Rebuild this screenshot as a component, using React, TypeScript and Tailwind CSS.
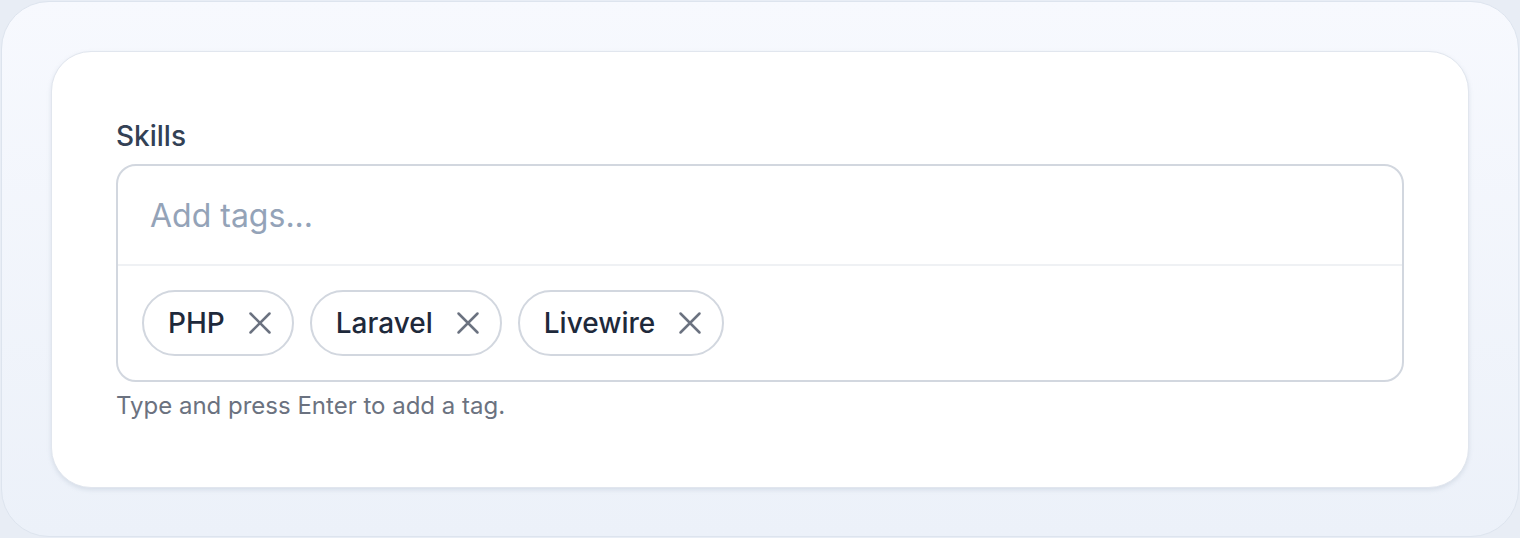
import { useState } from "react";

// Tags shown in the skills field
const initialTags = ["PHP", "Laravel", "Livewire"];

function XIcon() {
  return (
    <svg width="24" height="24" viewBox="0 0 24 24" fill="none" stroke="currentColor" strokeWidth="2.5" strokeLinecap="round">
      <path d="M2.5 2.5L21.5 21.5M21.5 2.5L2.5 21.5" />
    </svg>
  );
}

export default function App() {
  const [tags, setTags] = useState<string[]>(initialTags);
  const [value, setValue] = useState("");

  const handleKeyDown = (e: React.KeyboardEvent<HTMLInputElement>) => {
    if (e.key === "Enter" && value.trim()) {
      e.preventDefault();
      if (!tags.includes(value.trim())) setTags([...tags, value.trim()]);
      setValue("");
    }
  };

  return (
    <div className="min-h-[538px] bg-[#e8edf5] p-px font-['Inter',sans-serif]">
      <div className="h-[536px] rounded-[48px] border border-[#dde4ee] bg-gradient-to-b from-[#f7f9fe] to-[#ecf1f9] p-[49px]">
        <div className="rounded-[40px] border border-[#e1e6ee] bg-white px-16 pt-16 pb-[65px] shadow-[0_2px_4px_rgba(148,163,184,0.25)]">
          <label className="block text-[28px] leading-[40px] font-medium text-[#334155]">Skills</label>
          <div className="mt-2 rounded-[20px] border-2 border-[#d2d7df] bg-white">
            <input
              value={value}
              onChange={(e) => setValue(e.target.value)}
              onKeyDown={handleKeyDown}
              placeholder="Add tags..."
              className="block h-[98px] w-full rounded-t-[20px] bg-transparent px-8 text-[32px] text-[#1e293b] outline-none placeholder:text-[#94a3b8]"
            />
            <div className="flex flex-wrap gap-4 border-t-2 border-[#eff1f4] px-6 py-6">
              {tags.map((tag) => (
                <span
                  key={tag}
                  className="flex h-[66px] items-center gap-[23px] rounded-full border-2 border-[#d2d7df] pl-6 pr-5 text-[28px] font-medium text-[#1e293b]"
                >
                  {tag}
                  <button
                    type="button"
                    onClick={() => setTags(tags.filter((t) => t !== tag))}
                    className="text-[#6b7280]"
                  >
                    <XIcon />
                  </button>
                </span>
              ))}
            </div>
          </div>
          <p className="mt-2 text-[24px] leading-[32px] text-[#6b7280]">Type and press Enter to add a tag.</p>
        </div>
      </div>
    </div>
  );
}
